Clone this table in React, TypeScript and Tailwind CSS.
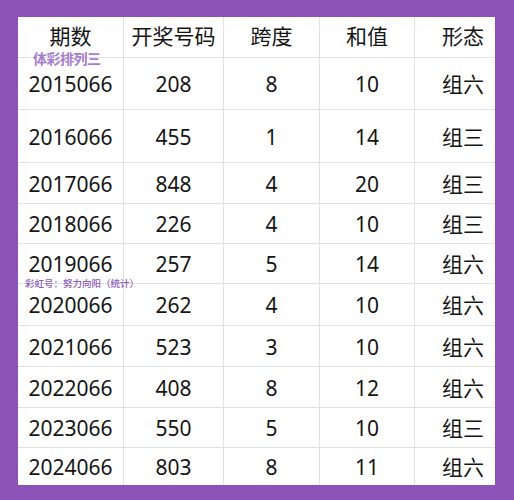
const rows = [
  { h: "h-[52px]", q: "2015066", n: "208", span: "8", sum: "10", form: "组六" },
  { h: "h-[53px]", q: "2016066", n: "455", span: "1", sum: "14", form: "组三" },
  { h: "h-[41px]", q: "2017066", n: "848", span: "4", sum: "20", form: "组三" },
  { h: "h-[40px]", q: "2018066", n: "226", span: "4", sum: "10", form: "组三" },
  { h: "h-[40px]", q: "2019066", n: "257", span: "5", sum: "14", form: "组六" },
  { h: "h-[42px]", q: "2020066", n: "262", span: "4", sum: "10", form: "组六" },
  { h: "h-[41px]", q: "2021066", n: "523", span: "3", sum: "10", form: "组六" },
  { h: "h-[41px]", q: "2022066", n: "408", span: "8", sum: "12", form: "组六" },
  { h: "h-[40px]", q: "2023066", n: "550", span: "5", sum: "10", form: "组三" },
  { h: "h-[38px]", q: "2024066", n: "803", span: "8", sum: "11", form: "组六" },
];

const cols = "grid grid-cols-[105px_100px_96px_95px_81px]";
const cell = "flex items-center justify-center border-l border-[#e2e2e2]";

export default function App() {
  return (
    <div
      className="relative w-[514px] h-[500px] bg-[#8c52b8] pt-[17px] pl-[18px] text-[21px] text-[#151515]"
      style={{ fontFamily: '"Noto Sans", "Noto Sans CJK SC", sans-serif' }}
    >
      <div className="w-[477px] bg-white">
        <div className={`${cols} h-[40px]`}>
          <div className="flex items-center justify-center">期数</div>
          <div className={cell}>开奖号码</div>
          <div className={cell}>跨度</div>
          <div className={cell}>和值</div>
          <div className={`${cell} !justify-end pr-[11px]`}>形态</div>
        </div>
        {rows.map((r) => (
          <div key={r.q} className={`${cols} ${r.h} border-t border-[#e2e2e2]`}>
            <div className="flex items-center justify-center pt-[3px]">{r.q}</div>
            <div className={`${cell} pt-[3px]`}>{r.n}</div>
            <div className={`${cell} pt-[3px]`}>{r.span}</div>
            <div className={`${cell} pt-[3px]`}>{r.sum}</div>
            <div className={`${cell} !justify-end pr-[11px] pt-[3px]`}>{r.form}</div>
          </div>
        ))}
      </div>

      {/* watermarks */}
      <div className="absolute left-[33px] top-[52px] text-[14px] font-bold leading-none text-[#9a6ccb]/90 tracking-[-0.5px]">
        体彩排列三
      </div>
      <div className="absolute left-[25px] top-[279px] text-[9.5px] font-medium leading-none text-[#8d5cc0]">
        彩虹号：努力向阳（统计）
      </div>
    </div>
  );
}
